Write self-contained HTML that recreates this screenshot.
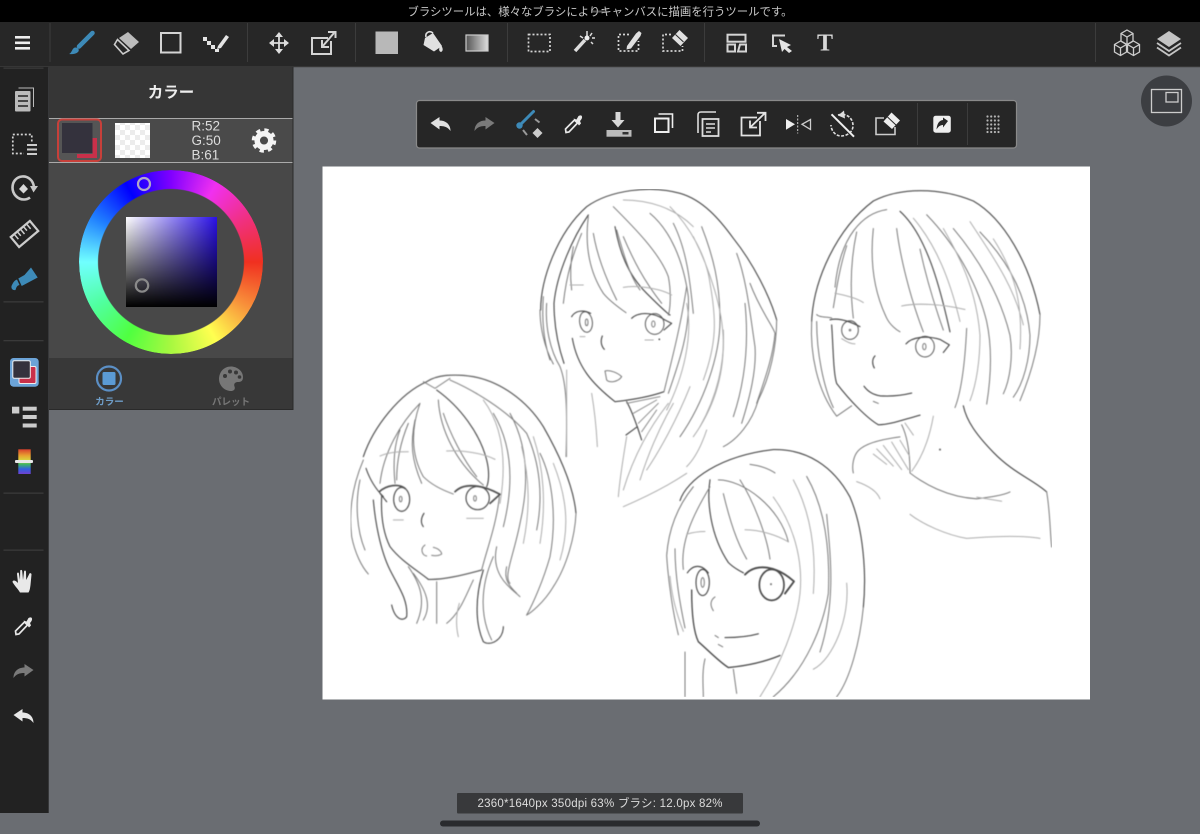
<!DOCTYPE html>
<html lang="ja"><head><meta charset="utf-8"><title>MediBang</title>
<style>
html,body{margin:0;padding:0;background:#6a6d72;width:1200px;height:834px;overflow:hidden}
svg{display:block;position:absolute;left:0;top:0}
text{font-family:"Liberation Sans","Noto Sans CJK JP",sans-serif}
.wheel{position:absolute;left:79px;top:170px;width:184px;height:184px;border-radius:50%;background:conic-gradient(from 90deg,#f03020,#f8903a 30deg,#ffff50 60deg,#a8f840 90deg,#50ff40 120deg,#50ffa0 150deg,#70ffff 180deg,#2080ff 210deg,#0000ff 240deg,#8000ff 270deg,#f030f0 300deg,#f03080 330deg,#f03020 360deg);-webkit-mask:radial-gradient(circle,transparent 72.5px,#000 73.5px);mask:radial-gradient(circle,transparent 72.5px,#000 73.5px)}
.sq{position:absolute;left:125.5px;top:216.5px;width:91px;height:90.5px;background:linear-gradient(to bottom,transparent,#000),linear-gradient(to right,#fff,#2a10e8)}
.d{stroke:#4c4c4c;stroke-width:3.4;fill:none;stroke-linecap:round;stroke-linejoin:round}
.m{stroke:#7c7c7c;stroke-width:3;fill:none;stroke-linecap:round;stroke-linejoin:round}
.l{stroke:#adadad;stroke-width:3;fill:none;stroke-linecap:round;stroke-linejoin:round}
.i{fill:none;stroke:#e4e4e4;stroke-width:1.8}
.t{fill:none;stroke:#d4d4d4;stroke-width:2}
.dot{fill:none;stroke:#d4d4d4;stroke-width:1.7;stroke-dasharray:2 2}
</style></head><body>
<svg width="1200" height="834" viewBox="0 0 1200 834" xmlns="http://www.w3.org/2000/svg">
<defs>
<filter id="b" x="0" y="0" width="100%" height="100%"><feGaussianBlur stdDeviation=".4"/></filter>
<path id="undo" d="M-10 -1 L-1 -7 V-3.5 C6 -3.5 10 1 10 7 C7 3 4 2 -1 2 V5.5 Z"/>
<g id="dropper"><path d="M-7.500 8.500 L-8 5 L1 -4 L4 -1 L-4.500 8 Z" fill="none" stroke="#e8e8e8" stroke-width="1.700"/><path d="M0 -5.500 L3 -4.500 L5 -8 Q8 -9.500 8.500 -7.500 Q9 -5.500 6.500 -3 L7.500 -.5 L5.500 1.500 Z" fill="#e8e8e8"/></g>
<pattern id="chk" width="10" height="10" patternUnits="userSpaceOnUse"><rect width="10" height="10" fill="#fff"/><rect width="5" height="5" fill="#ececec"/><rect x="5" y="5" width="5" height="5" fill="#ececec"/></pattern>
<linearGradient id="gr" x1="0" x2="1"><stop offset="0" stop-color="#555"/><stop offset="1" stop-color="#ddd"/></linearGradient>
<linearGradient id="rb" x1="0" x2="0" y1="0" y2="1"><stop offset="0" stop-color="#d8402c"/><stop offset=".25" stop-color="#e8a030"/><stop offset=".45" stop-color="#d8d840"/><stop offset=".6" stop-color="#40b860"/><stop offset=".8" stop-color="#3060e0"/><stop offset="1" stop-color="#7040d0"/></linearGradient>
</defs>

<rect width="1200" height="834" fill="#6a6d72"/>
<rect x="322.500" y="166.500" width="767.500" height="533" fill="#fff"/>

<g filter="url(#b)">
<!-- head 1 -->
<g transform="translate(340,170) scale(.33333)">
<path class="d" d="M602 420C602 330 650 190 740 110C810 60 930 45 1020 70C1090 90 1140 150 1180 205C1240 280 1290 380 1310 450"/>
<path class="m" d="M1310 450C1310 530 1290 620 1255 690C1235 760 1190 810 1150 830"/>
<path class="m" d="M600 420C600 470 612 530 640 582M620 400C615 470 630 540 660 590C680 640 682 720 678 860M610 380C605 450 610 510 630 570"/>
<path class="d" d="M745 135C700 200 650 310 642 400C642 470 655 530 672 580"/>
<path class="m" d="M745 140C735 220 745 300 790 370C810 395 840 415 858 428M760 190C770 250 790 310 830 390M700 230C690 280 690 320 695 360M725 190C700 250 680 310 670 400"/>
<path class="d" d="M825 170C838 240 860 310 920 370C950 400 975 425 990 435"/>
<path class="m" d="M820 110C880 170 960 250 985 320C995 370 990 420 985 435M850 200C880 270 910 330 965 400M830 180C850 250 870 320 900 360"/>
<path class="m" d="M930 130C990 180 1030 270 1045 380C1050 480 1020 570 985 670M1085 170C1120 260 1140 340 1140 450C1140 560 1090 700 1020 800M1000 160C1040 240 1050 330 1060 430"/>
<path class="l" d="M990 110C1050 170 1100 260 1110 340C1130 450 1130 520 1090 630M1040 400C1060 500 1030 620 980 720M1060 200C1110 300 1150 420 1150 520C1150 640 1110 730 1060 800M850 90C920 90 1000 110 1060 170"/>
<path class="m" d="M1190 250C1220 330 1230 430 1245 530C1250 600 1230 680 1205 760M1230 340C1260 420 1300 470 1305 490C1300 560 1270 640 1250 700M1215 400C1225 500 1220 620 1180 740"/>
<path class="l" d="M1150 480C1155 580 1130 680 1080 770M1000 700C960 770 925 850 900 930M985 700C930 770 880 860 850 960M1050 650C1010 750 960 840 920 900M1100 780C1080 840 1060 870 1040 890"/>
<path class="l" d="M690 345H730M850 352C890 345 960 355 995 375"/>
<path class="d" d="M697 505C712 590 755 640 825 695C870 690 930 680 972 665"/>
<path class="m" d="M972 665C990 590 1020 480 1040 350"/>
<path class="d" d="M787 498C780 515 785 530 793 538"/>
<ellipse cx="738" cy="456" rx="19" ry="31" class="m" style="stroke:#5c5c5c" transform="rotate(-8 738 456)"/>
<path class="d" d="M695 440C705 422 730 418 752 430"/>
<ellipse cx="740" cy="457" rx="4" ry="10" class="m"/>
<ellipse cx="944" cy="462" rx="28" ry="31" class="m" style="stroke:#5c5c5c"/>
<path class="d" d="M875 445C890 430 930 420 975 450L995 460L972 480"/>
<ellipse cx="940" cy="462" rx="5" ry="9" class="m"/>
<circle cx="958" cy="508" r="2.500" fill="#333"/>
<path class="l" d="M720 500H735M915 510H940"/>
<path class="m" d="M795 603C810 598 835 610 845 620C835 635 810 640 800 630Z"/>
<path class="d" d="M860 695C880 730 895 780 905 810L892 770L858 795"/>
<path class="l" d="M680 600V860M755 670C765 730 770 790 772 830M860 800C850 860 840 920 835 980M850 1010C920 980 980 950 1040 910"/>
<path class="m" style="stroke:#8c8c8c" d="M860 700L960 680M880 730L950 690M895 760L955 700M905 785L950 720"/>
</g>

<!-- head 2 -->
<g transform="translate(340,370) scale(.33333)">
<path class="d" d="M70 260C100 170 180 70 260 35C290 15 340 10 400 20C480 35 560 90 610 170C650 240 700 340 708 430"/>
<path class="m" d="M708 430C705 500 680 590 640 650C610 700 570 730 560 735"/>
<path class="m" d="M70 270C40 340 25 420 35 500C45 550 65 590 85 612M60 330C45 400 50 480 75 540"/>
<path class="d" d="M78 295C90 330 110 360 130 380"/>
<path class="d" d="M100 390C105 450 120 540 150 600C175 650 205 690 200 740C190 755 165 750 155 705"/>
<path class="m" d="M205 590C240 640 260 690 230 760M220 610C250 650 280 700 250 750"/>
<path class="m" d="M250 35L285 55L330 25"/>
<path class="m" d="M240 100C215 170 210 250 250 320C280 350 320 365 340 372M225 150C210 220 215 270 245 340M240 100C180 160 130 250 120 340M180 180C160 230 160 290 165 340M205 160C180 220 170 280 170 330"/>
<path class="d" d="M290 60C360 110 420 190 440 270C450 310 445 340 440 350"/>
<path class="m" d="M295 90C300 180 350 280 430 345M310 130C330 190 370 270 410 320M330 30C400 60 500 120 560 190C600 280 610 380 590 480"/>
<path class="m" d="M510 130C560 220 570 330 540 460C520 560 490 620 510 640M460 130C520 230 520 350 490 470M600 250C640 330 650 450 630 560C610 630 580 700 560 735"/>
<path class="l" d="M545 230C570 330 570 420 550 520M640 280C680 380 690 470 660 570M430 90C490 170 500 280 480 400M580 200C610 290 620 400 600 520"/>
<path class="m" d="M470 530C450 620 520 660 540 680M500 590C490 630 510 650 530 670"/>
<path class="d" d="M430 600C405 680 405 760 430 815C450 830 490 810 490 770"/>
<path class="m" d="M460 560C420 650 420 740 455 810M400 630C380 670 360 730 320 760"/>
<path class="l" d="M120 258C150 245 180 245 205 245M320 243C370 240 430 250 465 268"/>
<path class="d" d="M125 378C122 440 130 490 150 530C180 570 230 600 265 628C310 630 370 615 425 600"/>
<path class="m" d="M425 600C440 540 470 460 478 380"/>
<ellipse cx="185" cy="388" rx="24" ry="36" class="d"/>
<path class="d" style="stroke-width:5" d="M118 365C140 345 175 340 195 355"/>
<path class="d" d="M120 370L140 395"/>
<ellipse cx="182" cy="387" rx="4" ry="8" class="m"/>
<ellipse cx="413" cy="384" rx="35" ry="35" class="d"/>
<path class="d" style="stroke-width:5" d="M345 365C370 340 420 340 480 373L450 400"/>
<ellipse cx="405" cy="385" rx="4" ry="8" class="m"/>
<path class="d" d="M252 430C242 445 242 460 250 470"/>
<path class="l" d="M160 450H190M380 445H430"/>
<path class="m" d="M255 525C240 535 245 555 260 558M280 532C295 535 305 545 305 552C295 558 285 558 275 556"/>
<path class="m" d="M290 635V760"/>
<path class="l" d="M358 700C345 740 350 780 355 800"/>
</g>

<!-- heads 3 and 4 -->
<g transform="translate(660,170) scale(.33333,.3443)">
<path class="d" d="M455 440C460 320 530 170 640 90C720 50 840 50 940 90C1030 140 1110 270 1140 420"/>
<path class="m" d="M1140 420C1140 510 1110 600 1080 670"/>
<path class="m" d="M455 440C450 530 470 640 530 715L575 685M470 440C470 530 490 630 520 690"/>
<path class="m" d="M470 420C480 430 500 425 515 430"/>
<path class="d" d="M515 450C520 520 520 590 530 620C570 670 620 720 655 740C690 740 730 725 780 712"/>
<path class="d" d="M720 120C800 190 840 340 870 470"/>
<path class="m" d="M680 115C610 125 540 190 525 340M560 220C540 280 530 340 520 400M590 180C570 270 570 350 580 430M640 170C630 260 640 350 680 430C690 450 710 465 720 470M710 170C720 250 750 370 790 470M780 230C800 320 830 410 850 465"/>
<path class="m" d="M800 130C880 210 950 320 980 440C1000 530 990 620 980 680M880 170C950 250 1020 360 1050 480C1060 540 1050 610 1030 650M960 180C1040 260 1100 360 1110 480C1110 550 1090 620 1060 660"/>
<path class="l" d="M930 150C990 240 1060 330 1090 450M850 170C910 270 950 360 960 480C960 550 950 620 930 670M760 140C830 220 870 320 900 440M1000 200C1060 290 1090 380 1080 520"/>
<path class="m" d="M920 460C915 560 905 640 885 690"/>
<path class="l" d="M525 358C560 365 590 372 610 385M725 395C770 385 850 390 915 405"/>
<ellipse cx="570" cy="465" rx="25" ry="27" class="m" style="stroke:#5c5c5c"/>
<path class="d" d="M510 435C530 430 560 435 600 455"/>
<circle cx="570" cy="465" r="4" fill="#888"/>
<path class="l" d="M545 490C560 498 570 505 585 505"/>
<ellipse cx="795" cy="513" rx="28" ry="30" class="m" style="stroke:#5c5c5c"/>
<path class="d" d="M738 505C755 485 800 480 840 492L868 508L850 530"/>
<ellipse cx="793" cy="513" rx="5" ry="9" class="m"/>
<path class="d" d="M645 540C635 550 637 565 643 575"/>
<path class="d" d="M612 628C625 645 640 652 660 656C690 658 725 655 755 648"/>
<path class="m" d="M640 672L655 678"/>
<path class="d" d="M910 685C920 730 950 770 1000 820C1060 880 1120 900 1160 935"/>
<path class="m" d="M1160 935C1170 990 1170 1050 1175 1095"/>
<path class="m" d="M720 775C680 780 620 790 595 815C580 830 575 860 580 880M725 740C740 770 750 810 750 880C790 910 860 950 950 955C990 950 1030 945 1050 935"/>
<path class="l" d="M820 715C810 770 790 830 755 875M590 905C620 915 650 930 660 955M750 1000C790 1030 860 1060 920 1070C980 1065 1080 1060 1140 1070M950 950L1025 962"/>
<path class="l" d="M650 810L700 860M670 800L725 870M695 790L745 870M720 785L748 830M640 825L680 855M735 735L760 770"/>
<circle cx="840" cy="812" r="3" fill="#666"/>
<path class="d" d="M60 960C80 900 180 830 340 812C440 810 520 860 570 950C610 1040 620 1170 610 1270"/>
<path class="m" d="M610 1270C600 1370 570 1480 530 1530"/>
<path class="m" d="M20 1120C25 1050 50 980 100 920M20 1120C25 1200 40 1290 55 1350M45 1100C45 1180 60 1260 75 1330"/>
<path class="d" d="M150 900C140 960 150 1060 205 1140C220 1155 240 1165 250 1170"/>
<path class="m" d="M190 940C210 1020 230 1080 260 1130M240 900C280 960 320 1060 330 1130M175 900C250 900 360 980 385 1080M150 920C100 1000 60 1080 70 1160M270 855C310 860 330 870 345 880"/>
<path class="m" d="M440 890C500 990 510 1120 505 1230C490 1320 440 1450 340 1530M500 1000C510 1110 530 1250 480 1400"/>
<path class="l" d="M340 950C400 1030 430 1130 420 1230C410 1320 360 1440 300 1530M560 1200C570 1300 520 1420 460 1450M400 900C450 990 470 1100 460 1230"/>
<path class="l" d="M80 1058C100 1052 120 1050 135 1050M255 1045C300 1045 350 1060 385 1080"/>
<path class="d" style="stroke-width:4" d="M95 1220C95 1290 100 1340 115 1370C150 1400 180 1430 205 1445C260 1440 310 1430 360 1410"/>
<ellipse cx="128" cy="1198" rx="20" ry="38" class="d"/>
<path class="d" d="M82 1170C100 1145 125 1145 145 1170"/>
<ellipse cx="128" cy="1198" rx="5" ry="14" class="m"/>
<ellipse cx="335" cy="1205" rx="37" ry="45" class="d" style="stroke-width:5"/>
<path class="d" style="stroke-width:5.500" d="M255 1175C290 1140 350 1150 402 1195L375 1230"/>
<circle cx="333" cy="1203" r="3" fill="#777"/>
<path class="m" d="M165 1240C150 1250 150 1265 160 1280"/>
<path class="d" d="M195 1358C230 1358 265 1355 295 1347"/>
<path class="m" d="M165 1352L175 1358M175 1378L188 1385"/>
<path class="m" d="M75 1400V1530M135 1420C125 1460 130 1500 130 1530M220 1450L230 1520"/>
<path class="l" d="M30 1180C35 1240 50 1290 70 1340"/>
</g>
</g>

<!-- top bars -->
<rect width="1200" height="22" fill="#000"/>
<text x="600" y="15.500" text-anchor="middle" font-size="11.300" fill="#c8c8c8" textLength="385" lengthAdjust="spacingAndGlyphs">ブラシツールは、様々なブラシによりキャンバスに描画を行うツールです。</text>
<rect x="592" y="10.500" width="14" height="2" rx="1" fill="#888" opacity=".6"/>
<rect y="22" width="1200" height="45" fill="#272727"/>
<rect y="66.500" width="1200" height=".8" fill="#444"/>
<g fill="#3c3c3c"><rect x="49.500" y="23" width="1" height="39"/><rect x="247" y="23" width="1" height="39"/><rect x="355" y="23" width="1" height="39"/><rect x="507" y="23" width="1" height="39"/><rect x="704" y="23" width="1" height="39"/><rect x="1095" y="23" width="1" height="39"/></g>

<g fill="#eee"><rect x="15" y="36" width="15" height="2.600"/><rect x="15" y="41.500" width="15" height="2.600"/><rect x="15" y="47" width="15" height="2.600"/></g>
<path d="M92.500 33L79 46.500" stroke="#3d8ab8" stroke-width="4.500" stroke-linecap="round"/><path d="M69 54C72 53 72 48 75 47.500C78 47 80 50 78 52C76 54 72 54.500 69 54Z" fill="#3d8ab8"/>
<path d="M128 32L139 42L131 49L119 38Z" fill="#bbb"/><path d="M117.500 39.500L114.500 44.500L123 54L129 50.500Z" fill="none" stroke="#ccc" stroke-width="1.600"/>
<rect x="161" y="33" width="19.500" height="19.500" class="t"/>
<g fill="#e4e4e4"><rect x="203" y="37" width="4" height="4"/><rect x="207" y="41" width="4" height="4"/><rect x="211" y="45" width="4" height="4"/><rect x="215" y="49" width="4" height="3"/></g><path d="M218 46L226 35L229 37L221 48L217 49Z" fill="#e4e4e4"/>
<path d="M279 34V52M270 43H288" stroke="#ddd" stroke-width="1.800"/><path d="M279 32L283 37H275ZM279 54L283 49H275ZM269 43L274 39V47ZM289 43L284 39V47Z" fill="#ddd"/>
<path d="M328 38H312V54H331V41" class="t"/><path d="M322 47L334 33M328 32H335.500V38M322 40V47H329" class="t"/>
<rect x="375.500" y="31.500" width="22.500" height="22.500" fill="#b8b8b8"/>
<path d="M425 38L433 33L442 46L434 51.500L423.500 45Z" fill="#e0e0e0"/><path d="M426 37C425 33 429 30 433 33" fill="none" stroke="#e0e0e0" stroke-width="1.600"/><path d="M441 45C443 48 443.500 51 441 52C438.500 51.500 438.500 48 441 45Z" fill="#e0e0e0"/>
<rect x="466" y="35" width="22" height="16" fill="url(#gr)" stroke="#ccc" stroke-width="1.200"/>
<rect x="528.500" y="34.500" width="21.500" height="17" class="dot"/>
<path d="M575 51L585 40" stroke="#ddd" stroke-width="3.500"/><path d="M587 31V37M592 38H595M580 36L583 38M592 33L590 36M591 42L593 44" stroke="#ddd" stroke-width="1.500"/><circle cx="587" cy="38" r="2.500" fill="#eee"/>
<path d="M629 34.500H618.500V51H638.500V41" class="dot"/><path d="M627 46L636 33.500L639 31L641.500 33L640.500 36L631 48.500L626.500 49.500Z" fill="#e0e0e0"/>
<path d="M671 34.500H663V51H682.500V46" class="dot"/><path d="M679.500 30L688 38L680.500 46L672 38Z" fill="#e0e0e0"/><path d="M675.500 34.500L683.500 42" stroke="#272727" stroke-width="1"/>
<rect x="727.500" y="34.700" width="18" height="7" class="t"/><rect x="727.500" y="44.500" width="7.500" height="7" class="t"/><path d="M740 44.500H746V51.500H738Z" class="t"/>
<path d="M785 35.500H773V46H777" class="t"/><path d="M779 39L791 45L787 47L792 51L789 53L784.500 49L782 52Z" fill="#e4e4e4"/>
<text x="825" y="50.500" text-anchor="middle" font-size="24" font-weight="700" fill="#d8d8d8" style="font-family:'Liberation Serif',serif">T</text>
<g fill="none" stroke="#ccc" stroke-width="1.300"><path d="M1127 30L1133 33.500V41L1127 44.500L1121 41V33.500ZM1121 33.500L1127 37L1133 33.500M1127 37V44.500"/><path d="M1120.500 41L1126.500 44.500V52L1120.500 55.500L1114.500 52V44.500ZM1114.500 44.500L1120.500 48L1126.500 44.500M1120.500 48V55.500"/><path d="M1133.500 41L1139.500 44.500V52L1133.500 55.500L1127.500 52V44.500ZM1127.500 44.500L1133.500 48L1139.500 44.500M1133.500 48V55.500"/></g>
<path d="M1169 31L1181 39L1169 47L1157 39Z" fill="#c4c4c4"/><path d="M1157 43L1169 51L1181 43M1157 47.500L1169 55.500L1181 47.500" fill="none" stroke="#c4c4c4" stroke-width="1.800"/>

<!-- sidebar -->
<rect y="67" width="48.700" height="746" fill="#222"/>
<g fill="#3a3a3a"><rect x="3.500" y="67.500" width="40" height="1.300"/><rect x="3.500" y="301.200" width="40" height="1.300"/><rect x="3.500" y="340" width="40" height="1.300"/><rect x="3.500" y="492.500" width="40" height="1.300"/><rect x="3.500" y="549.500" width="40" height="1.300"/></g>
<path d="M18.500 88H33.500V107" fill="none" stroke="#bbb" stroke-width="1"/><rect x="15" y="91" width="15.500" height="20.500" fill="#bbb" rx="1"/><path d="M18 96H28M18 101H28M18 106H28" stroke="#222" stroke-width="1.500"/>
<rect x="12.800" y="134.500" width="19" height="19" class="dot" stroke-width="1.500"/><rect x="24" y="142" width="14" height="14" fill="#222"/><path d="M27 145H37M27 149.500H37M27 154H37" stroke="#ccc" stroke-width="2"/>
<path d="M34 187C33 180 28 176 22 176.500C16 177 12.500 182 12.500 187.500C12.500 194 17.500 199.500 24 199.500C26.500 199.500 28 199 30 197.500" fill="none" stroke="#c8c8c8" stroke-width="2.600"/><path d="M30 186H38L33.500 192.500Z" fill="#c8c8c8"/><path d="M23.500 184L28 189L23.500 193.500L19 189Z" fill="#d8d8d8"/>
<g transform="translate(24.500,234) rotate(-40)"><rect x="-12.500" y="-6.500" width="25" height="13" fill="none" stroke="#ccc" stroke-width="2.200"/><path d="M-8 -5.500V0M-4 -5.500V-1M0 -5.500V0M4 -5.500V-1M8 -5.500V0" stroke="#ccc" stroke-width="1.500"/></g>
<path d="M31 267.500L37.700 277.500L21.700 286L18.300 278.500L24.500 275Z" fill="#3d8ab8"/><path d="M11.500 286C13 283 14 280.500 17 279.500L19.500 285C17 285.500 16.500 287 15.500 290C13 290.500 11 289 11.500 286Z" fill="#3d8ab8"/>
<rect x="10" y="358" width="28.700" height="28.700" rx="3.500" fill="#6ca4d8"/>
<rect x="19" y="366.500" width="17" height="17" rx="1.500" fill="#c8304a" stroke="#eee" stroke-width="1"/>
<rect x="12.800" y="360.700" width="17.500" height="17.500" rx="1.500" fill="#34323d" stroke="#eee" stroke-width="1"/>
<g fill="#ccc"><rect x="12" y="406.700" width="7.300" height="6.800"/><rect x="22.700" y="406.700" width="14" height="4"/><rect x="22.700" y="415" width="14" height="4"/><rect x="22.700" y="423.500" width="14" height="4"/></g>
<rect x="18.300" y="449.300" width="12.400" height="24.700" fill="url(#rb)"/><rect x="15" y="460" width="18" height="3" fill="#e8e8e8" rx="1"/>
<path transform="translate(23,581)" d="M-3 11.500C-5 8 -9 4 -10.500 1C-10.500 -1 -8 -1 -6 1L-5 2L-6 -7C-6 -9 -4 -9 -4 -7L-3 -1L-2.800 -10C-2.800 -11.500 -1 -11.500 -.8 -10L0 -1L1 -9C1 -11 3 -11 3 -9L3.200 -1L6 -6.500C6.500 -8.500 8.500 -8 8.500 -6.500L7.500 4C7 8 6.500 10 5.500 11.500Z" fill="#e8e8e8"/>
<use href="#dropper" transform="translate(23.500,626)"/>
<use href="#undo" transform="translate(23.500,671) scale(-1,1)" fill="#7a7a7a"/>
<use href="#undo" transform="translate(23.500,716)" fill="#e8e8e8"/>

<!-- colour panel -->
<rect x="49" y="67" width="244" height="342" fill="#484848"/>
<rect x="49" y="67" width="244" height="51" fill="#363636"/>
<rect x="49" y="118" width="244" height="44.500" fill="#4a4a4a"/>
<rect x="49" y="358" width="244" height="51" fill="#383838"/>
<rect x="49" y="118" width="244" height="1" fill="#aaa"/><rect x="49" y="162" width="244" height="1" fill="#aaa"/>
<rect x="292.500" y="67" width="1" height="342" fill="#2a2a2a"/><rect x="49" y="409" width="244.500" height="1" fill="#2a2a2a"/>
<text x="171" y="97.500" text-anchor="middle" font-size="15.500" font-weight="700" fill="#eee">カラー</text>
<rect x="58" y="119.500" width="43" height="41.500" rx="4" fill="#555" stroke="#c8403a" stroke-width="2"/>
<rect x="62" y="123" width="30.500" height="30" fill="#34323d"/>
<path d="M92.500 138H97V158H77V154H92.500Z" fill="#c8304a"/>
<rect x="115" y="123" width="35" height="35" fill="url(#chk)"/>
<text x="191.500" y="130.500" font-size="13.500" fill="#ddd">R:52</text>
<text x="191.500" y="145" font-size="13.500" fill="#ddd">G:50</text>
<text x="191.500" y="159.500" font-size="13.500" fill="#ddd">B:61</text>
<circle cx="264" cy="140.500" r="10.500" fill="none" stroke="#f4f4f4" stroke-width="3.500" stroke-dasharray="4.200 4.050"/>
<circle cx="264" cy="140.500" r="6.800" fill="none" stroke="#f4f4f4" stroke-width="5.500"/>
<circle cx="109" cy="378.500" r="12" fill="none" stroke="#5b8fc5" stroke-width="2.200"/><rect x="102.500" y="372" width="13" height="13" rx="1.500" fill="#5b9bd5"/>
<text x="109.500" y="405" text-anchor="middle" font-size="9.500" font-weight="700" fill="#6f9ec9">カラー</text>
<path d="M231 366.500C223 366.500 219 373 219 379C219 385 224 391 231 391C234 391 235.500 389 234.500 386.500C233.500 384 235 382 238 382C241 382 243 381 243 377C243 371 237 366.500 231 366.500Z" fill="#777"/>
<g fill="#383838"><circle cx="225" cy="376" r="2"/><circle cx="230" cy="371.500" r="2"/><circle cx="236" cy="372.500" r="2"/><circle cx="239.500" cy="377" r="1.800"/></g>
<text x="231" y="405" text-anchor="middle" font-size="9.500" font-weight="700" fill="#777">パレット</text>

<!-- floating toolbar -->
<rect x="416.500" y="100.500" width="600" height="47.500" rx="3" fill="#262626" stroke="#8a8a8a" stroke-width="1.200"/>
<rect x="917" y="103" width="1" height="42" fill="#3c3c3c"/><rect x="967" y="103" width="1" height="42" fill="#3c3c3c"/>
<use href="#undo" transform="translate(440.500,124)" fill="#e0e0e0"/>
<use href="#undo" transform="translate(484.500,124) scale(-1,1)" fill="#7a7a7a"/>
<path d="M533.500 111.500L521 124" stroke="#3d8ab8" stroke-width="3" stroke-linecap="round"/><circle cx="519.500" cy="125.500" r="3.200" fill="#3d8ab8"/>
<path d="M535 119L539.500 122.500M523 130L527 135" stroke="#999" stroke-width="2"/>
<path d="M537.500 128L542.500 133L537.500 138L532.500 133Z" fill="#ccc"/>
<use href="#dropper" transform="translate(573.500,124)"/>
<path d="M615.500 112H620.500V120H624.500L618 127.500L611.500 120H615.500Z" fill="#d8d8d8"/>
<rect x="606.500" y="130" width="25" height="6.700" fill="#bbb"/><rect x="622.500" y="132" width="6" height="2.500" fill="#333"/>
<rect x="655" y="118.500" width="13.500" height="13.500" fill="none" stroke="#eee" stroke-width="2"/><path d="M658.500 114H672.500V128" fill="none" stroke="#eee" stroke-width="1.600"/>
<path d="M698 133V115C698 113 699 112 701 112H716" fill="none" stroke="#ddd" stroke-width="1.600"/><rect x="702.500" y="119" width="16" height="17" fill="#262626" stroke="#ddd" stroke-width="1.800"/><path d="M706 124H715M706 128H715M706 132H711" stroke="#ddd" stroke-width="1.500"/>
<path d="M757 117.500H741.500V135.500H760V121" class="i"/><path d="M750 127.500L764.500 113.500M757 112.800H765.500V121M750 120.500V127.500H757" class="i"/>
<path d="M786 119L795 124.300L786 129.700Z" fill="#eee"/><path d="M797.700 115V133.500" stroke="#ccc" stroke-dasharray="2 1.500"/><path d="M810.500 119.500V129.500L802 124.300Z" fill="none" stroke="#ccc" stroke-width="1.300"/>
<path d="M838 115C846 112.500 853 118 853 125.500C853 133 846 136 841 136C835 136 831 130 831 125" fill="none" stroke="#ddd" stroke-width="1.600" stroke-dasharray="3 1.500"/><path d="M844 110.500L838 115.500L845 118.500Z" fill="#ddd"/><path d="M831.500 114.300L854 136.700" stroke="#eee" stroke-width="2"/>
<path d="M884 118H876V134.500H895V127" fill="none" stroke="#ccc" stroke-width="1.600"/><path d="M891.500 112.500L900 120.500L892 129L883.500 121.500Z" fill="#eee"/><path d="M887.500 117L896 125" stroke="#262626" stroke-width="1"/>
<rect x="933.300" y="115.700" width="17.500" height="17" rx="2.500" fill="#eee"/><path d="M948 121L943 117.500V120C939 120.500 937 124 936.500 129.500C938.500 126 941 125 943 125V127.500Z" fill="#262626"/>
<g fill="#b4b4b4"><circle cx="987.500" cy="116.500" r="1.100"/><circle cx="991.200" cy="116.500" r="1.100"/><circle cx="994.900" cy="116.500" r="1.100"/><circle cx="998.500" cy="116.500" r="1.100"/><circle cx="987.500" cy="120.500" r="1.100"/><circle cx="991.200" cy="120.500" r="1.100"/><circle cx="994.900" cy="120.500" r="1.100"/><circle cx="998.500" cy="120.500" r="1.100"/><circle cx="987.500" cy="124.500" r="1.100"/><circle cx="991.200" cy="124.500" r="1.100"/><circle cx="994.900" cy="124.500" r="1.100"/><circle cx="998.500" cy="124.500" r="1.100"/><circle cx="987.500" cy="128.500" r="1.100"/><circle cx="991.200" cy="128.500" r="1.100"/><circle cx="994.900" cy="128.500" r="1.100"/><circle cx="998.500" cy="128.500" r="1.100"/><circle cx="987.500" cy="132" r="1.100"/><circle cx="991.200" cy="132" r="1.100"/><circle cx="994.900" cy="132" r="1.100"/><circle cx="998.500" cy="132" r="1.100"/></g>

<circle cx="1166.500" cy="101" r="25.500" fill="#3c3e42"/>
<rect x="1151.500" y="89.500" width="30" height="23" fill="none" stroke="#ccc" stroke-width="1.300"/><rect x="1166" y="92.500" width="12" height="9.500" fill="none" stroke="#ccc" stroke-width="1.300"/>

<rect x="457" y="793" width="286" height="20.500" rx="1" fill="#38393b"/>
<text x="600" y="807" text-anchor="middle" font-size="11.500" fill="#ddd" textLength="245" lengthAdjust="spacing">2360*1640px 350dpi 63% ブラシ: 12.0px 82%</text>
<rect x="440" y="820.500" width="320" height="6" rx="3" fill="#2a2b2e"/>
</svg>
<div class="wheel"></div>
<div class="sq"></div>
<svg width="1200" height="834" viewBox="0 0 1200 834" style="pointer-events:none">
<circle cx="144" cy="184" r="6" fill="none" stroke="#b0a8c8" stroke-width="2.200"/>
<circle cx="142" cy="285.500" r="6.200" fill="none" stroke="#8a8a8a" stroke-width="2.200"/>
</svg>
</body></html>
